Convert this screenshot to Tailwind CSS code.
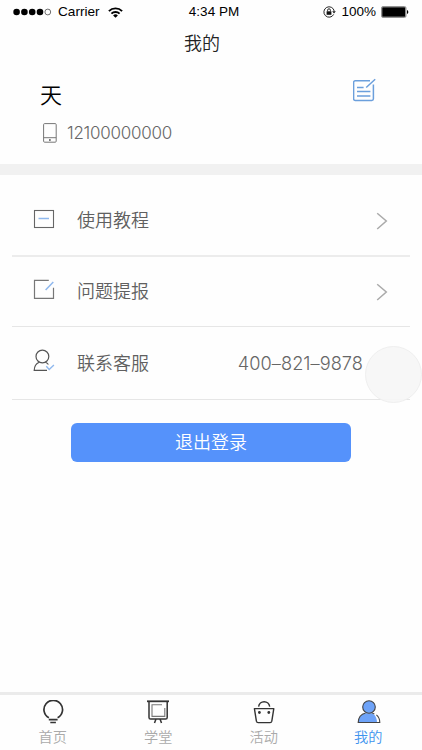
<!DOCTYPE html>
<html lang="zh-CN">
<head>
  <meta charset="UTF-8">
  <meta name="viewport" content="width=device-width, initial-scale=1.0">
  <title>我的</title>
  <script src="https://cdn.jsdelivr.net/npm/@tailwindcss/browser@4"></script>
</head>
<body class="bg-[#fefefe] font-['Liberation_Sans','Noto_Sans_CJK_SC',sans-serif] font-[350]">
  <div class="w-full h-[750px] flex flex-col overflow-hidden">

    <!-- Status bar -->
    <div class="h-6 shrink-0 grid grid-cols-3 items-center text-[13.5px] leading-6 text-black px-[13px]">
      <div class="flex items-center">
        <svg class="w-[39px] h-2" viewBox="0 0 39 8">
          <circle cx="3.6" cy="4" r="3.3"/>
          <circle cx="11.4" cy="4" r="3.3"/>
          <circle cx="19.2" cy="4" r="3.3"/>
          <circle cx="27" cy="4" r="3.3"/>
          <circle cx="34.8" cy="4" r="2.9" fill="none" stroke="#333" stroke-width=".7"/>
        </svg>
        <span class="ml-[6px] text-[13.6px]">Carrier</span>
        <svg class="ml-[8px] w-[15px] h-[11px]" viewBox="0 0 15 11" fill="none" stroke="#000" stroke-width="1.9">
          <path d="M.9 4.1a9.4 9.4 0 0 1 13.2 0"/>
          <path d="M3.4 6.7a5.8 5.8 0 0 1 8.2 0"/>
          <path d="M7.5 10.8L5.1 8.4a3.4 3.4 0 0 1 4.8 0z" fill="#000" stroke="none"/>
        </svg>
      </div>
      <div class="text-center pl-[6px]">4:34 PM</div>
      <div class="flex items-center justify-end">
        <svg class="w-[13px] h-3" viewBox="0 0 13 12" fill="none" stroke="#111" stroke-width=".9">
          <path d="M10.7 8.4A5.2 5.2 0 1 1 11.2 5"/>
          <path d="M9.2 5.3h3.6L11 7.6z" fill="#111" stroke="none"/>
          <rect x="3.6" y="5.3" width="4.8" height="3.5" fill="#111" stroke="none"/>
          <path d="M4.6 5.4V4.2a1.4 1.4 0 0 1 2.8 0v1.2"/>
        </svg>
        <span class="ml-[5px] mr-px">100%</span>
        <svg class="ml-[4px] w-7 h-3" viewBox="0 0 28 12">
          <rect x=".5" y=".5" width="24.5" height="11" rx="1.5" fill="none" stroke="#777" stroke-width=".8"/>
          <rect x="1.2" y="1.2" width="23.1" height="9.6" rx=".6"/>
          <path d="M26 4v4c1.8-.6 1.8-3.4 0-4z"/>
        </svg>
      </div>
    </div>

    <!-- Title -->
    <div class="h-[38px] shrink-0 text-center pr-[18px] text-[18px] leading-[40px] text-[#222]">我的</div>

    <!-- Profile -->
    <div class="h-[102px] shrink-0 flex justify-between pl-10 pr-[46px]">
      <div class="pt-[18px]">
        <div class="text-[22px] leading-8 text-black">天</div>
        <div class="flex items-center mt-[10px] h-[22px]">
          <svg class="w-[14px] h-5 ml-[3px]" viewBox="0 0 14 20" fill="none" stroke="#777">
            <rect x=".6" y=".6" width="12.6" height="18.6" rx="1"/>
            <path d="M.6 14.7h12.6"/>
            <circle cx="6.9" cy="17" r=".9" fill="#555" stroke="none"/>
          </svg>
          <span class="ml-[10px] font-['Inter',sans-serif] font-light text-[17px] leading-[22px] tracking-[-0.25px] text-[#666]">12100000000</span>
        </div>
      </div>
      <svg class="mt-[16px] -mr-px w-6 h-6" viewBox="0 0 24 24" fill="none" stroke="#6b9fdc" stroke-width="1.5">
        <path d="M17 2.7H2.2a1.6 1.6 0 0 0-1.6 1.6v16.5a1.6 1.6 0 0 0 1.6 1.6h16.6a1.6 1.6 0 0 0 1.6-1.6V6.5"/>
        <path d="M22.2 1.3l-9 8.2M4 9.6h6.6M4 13.600h13.400M4 18h13.400"/>
      </svg>
    </div>

    <div class="h-[11px] shrink-0 bg-[#f1f1f1]"></div>

    <!-- Menu -->
    <div class="mx-3 shrink-0 text-[18px] text-[#606060]">
      <div class="h-[82px] flex items-center border-b-2 border-[#ececec] pl-[21px] pr-[22px] pt-[11px]">
        <svg class="w-[22px] h-5 -mt-[4px]" viewBox="0 0 22 20" fill="none" stroke="#666" stroke-width="1.1">
          <rect x="1.5" y="1.5" width="19" height="17"/>
          <path d="M5.5 9.5h10.5" stroke="#8fb8ee" stroke-width="1.5"/>
        </svg>
        <span class="ml-[22px] mt-px leading-6">使用教程</span>
        <svg class="ml-auto w-3 h-[18px] mt-[1px]" viewBox="0 0 12 18" fill="none" stroke="#aaa" stroke-width="1.5">
          <path d="M1.2 1.2L10.3 9l-9.1 8"/>
        </svg>
      </div>
      <div class="h-[70px] flex items-center border-b border-[#e6e6e6] pl-[21px] pr-[22px]">
        <svg class="w-[22px] h-[22px] -mt-[5px]" viewBox="0 0 22 22" fill="none" stroke="#777">
          <path d="M15.8 2.3H1.5v18h19V9.8" stroke-width="1.2"/>
          <path d="M20.3 4l-7.7 8" stroke="#8fb8ee" stroke-width="1.5"/>
        </svg>
        <span class="ml-[22px] leading-6">问题提报</span>
        <svg class="ml-auto w-3 h-[18px]" viewBox="0 0 12 18" fill="none" stroke="#aaa" stroke-width="1.5">
          <path d="M1.2 1.2L10.3 9l-9.1 8"/>
        </svg>
      </div>
      <div class="relative h-[73px] flex items-center border-b border-[#e6e6e6] pl-[21px] pr-[47px]">
        <svg class="w-[22px] h-[23px] -mt-[5px]" viewBox="0 0 22 23" fill="none" stroke="#555" stroke-width="1.2">
          <circle cx="9.4" cy="7.5" r="6.4"/>
          <path d="M6.2 13.2C3.2 14.4 1.3 17.4 1.2 21.4H14M12.4 13.2c1.2.5 2.2 1.3 3 2.3"/>
          <path d="M13.3 17.2l2.9 3.2 4.7-4.4" stroke="#8fb8ee" stroke-width="1.4"/>
        </svg>
        <span class="ml-[22px] mt-px leading-6">联系客服</span>
        <span class="ml-auto font-['Inter',sans-serif] font-light text-[18.2px] leading-6 tracking-[0.05px] text-[#666]">400–821–9878</span>
        <!-- Floating touch button -->
        <div class="absolute -right-3 top-[19px] w-[57px] h-[57px] rounded-full border border-[#efefef] bg-[#f6f6f6]/90"></div>
      </div>
    </div>

    <button class="mt-[23px] ml-[71px] w-[280px] h-[39px] shrink-0 rounded-[6px] bg-[#5592fb] text-white text-[18px] leading-[39px] pt-px">退出登录</button>

    <!-- Tab bar -->
    <div class="mt-auto h-[58px] shrink-0 grid grid-cols-4 border-t-3 border-[#ebebeb] text-[14.2px] leading-5 text-[#aaa]">
      <div class="flex flex-col items-center pt-[5px]">
        <svg class="w-6 h-6" viewBox="0 0 24 24" fill="none" stroke="#333" stroke-width="1.7">
          <path d="M7.9 17.8A9.3 9.3 0 1 1 16.6 17.8"/>
          <path d="M7.8 19.6h8.8M9.3 22.5h5.6"/>
        </svg>
        <span class="mt-[3px]">首页</span>
      </div>
      <div class="flex flex-col items-center pt-[5px]">
        <svg class="w-6 h-6" viewBox="0 0 24 24" fill="none" stroke="#333" stroke-width="1.5">
          <path d="M1 1.3h22" stroke-width="1.8"/>
          <path d="M3 2v15.4a1.6 1.6 0 0 0 1.6 1.6h15a1.6 1.6 0 0 0 1.6-1.6V2M9.8 19.6L8.5 23M14.2 19.6l1.3 3.4"/>
          <path d="M16 4.7H6v11.7h12.8V8" stroke="#777" stroke-width="1.1"/>
        </svg>
        <span class="mt-[3px]">学堂</span>
      </div>
      <div class="flex flex-col items-center pt-[5px]">
        <svg class="w-6 h-6" viewBox="0 0 24 24" fill="none" stroke="#333" stroke-width="1.4">
          <path d="M2.4 8.6h19.4l-2 12.6a1.8 1.8 0 0 1-1.7 1.4H6.1a1.8 1.8 0 0 1-1.7-1.4z" stroke-linejoin="round"/>
          <path d="M6.6 6.6a5.6 5.6 0 0 1 11.1 0"/>
          <circle cx="7.4" cy="12.5" r="1.4" fill="#333" stroke="none"/>
          <circle cx="16.8" cy="12.5" r="1.4" fill="#333" stroke="none"/>
        </svg>
        <span class="mt-[3px]">活动</span>
      </div>
      <div class="flex flex-col items-center pt-[5px] text-[#3f94ee]">
        <svg class="w-6 h-6" viewBox="0 0 24 24" fill="#6ea3f8" stroke="#444" stroke-width="1.1">
          <path d="M1.2 22.5c.2-5.2 3.4-8.800 8-9.200h5c3.600.6 5.600 4 5.800 9.200z" stroke="none"/>
          <path d="M8.600 13C4.300 14 1.400 17.500 1.200 22.500H22.800c0-3-1.200-5.800-3.400-7.600M15 13c.9.200 1.600.5 2.300.9" fill="none"/>
          <circle cx="12" cy="7" r="6.300"/>
        </svg>
        <span class="mt-[3px] mr-[2px]">我的</span>
      </div>
    </div>
  </div>
</body>
</html>
